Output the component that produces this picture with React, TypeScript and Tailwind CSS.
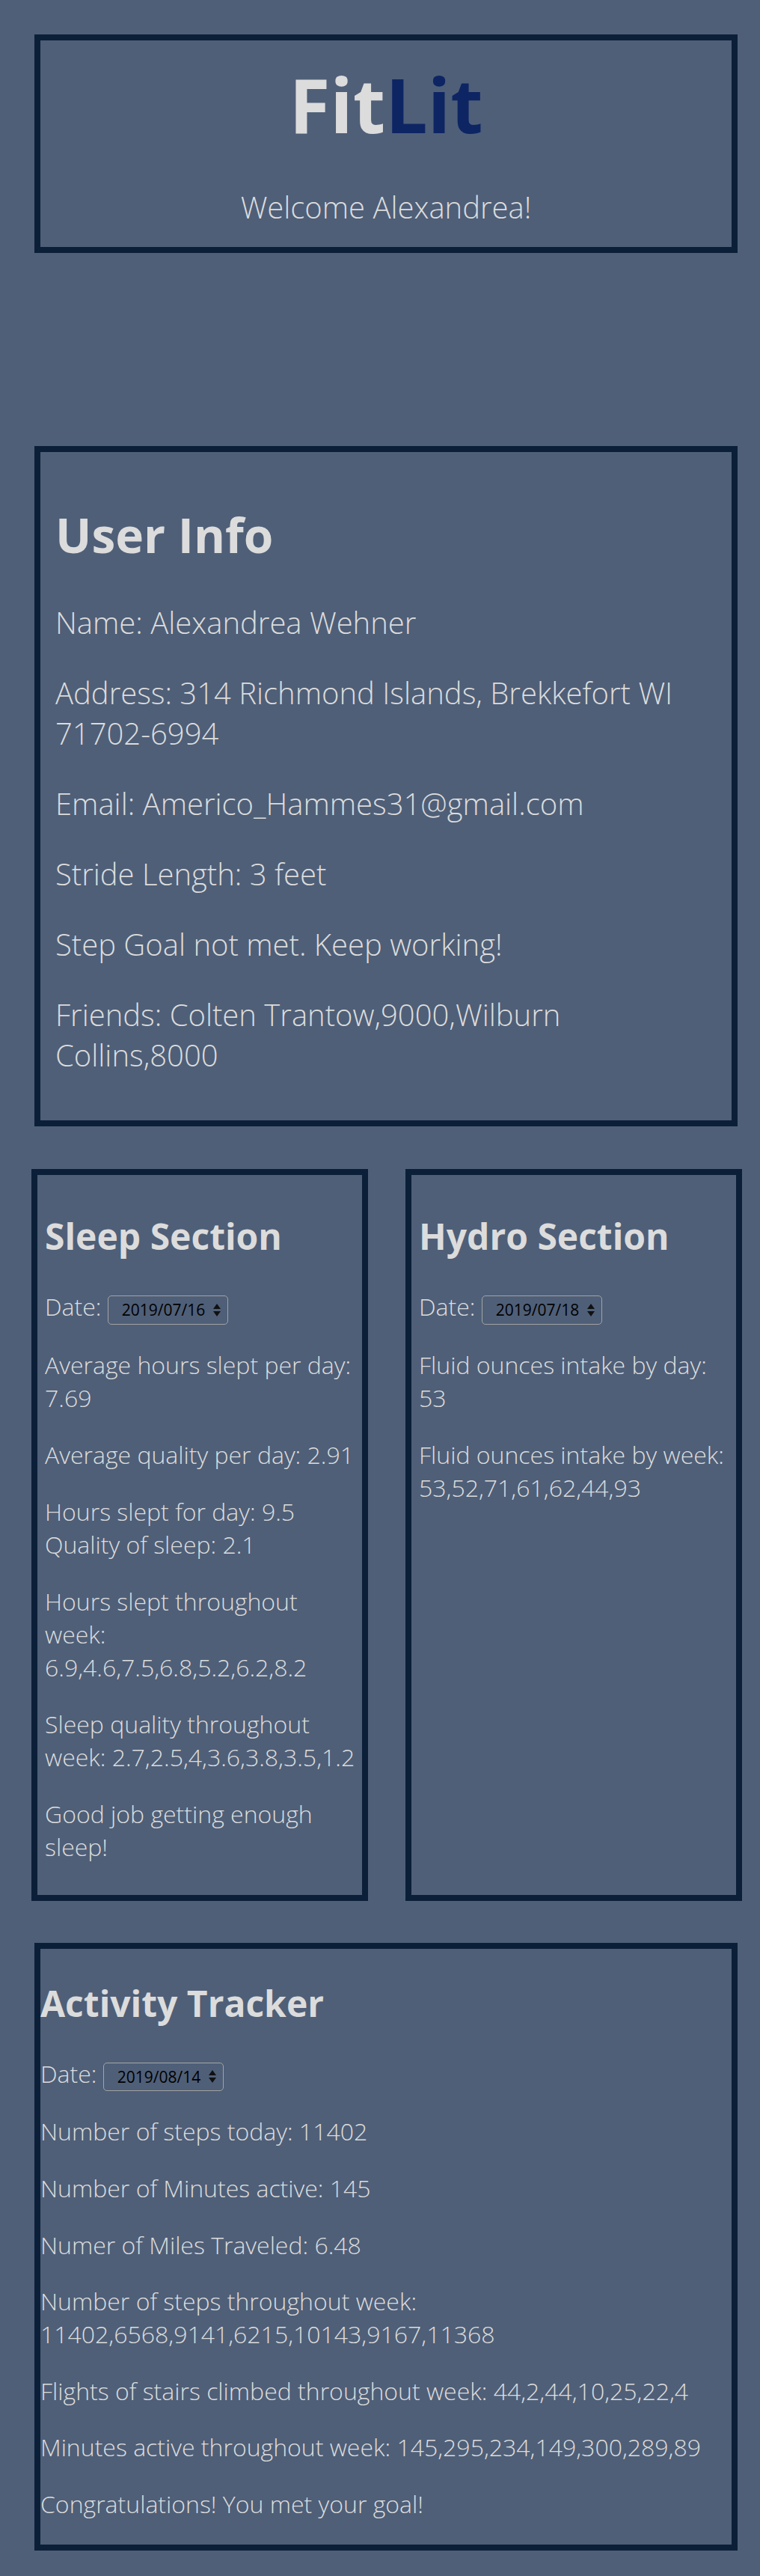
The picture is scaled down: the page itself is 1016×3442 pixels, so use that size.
import React from "react";

function DateSelect({ value }: { value: string }) {
  return (
    <span className="inline-flex h-[38.6px] w-[161px] items-center justify-between rounded-[5px] border border-[#a3a3a3] pl-[18px] pr-[9px] align-baseline text-[21px] font-normal leading-[28.6px] text-black">
      <span>{value}</span>
      <svg width="10" height="17" viewBox="0 0 10 17" aria-hidden="true">
        <path d="M5 0 L10 7 H0 Z M0 10 H10 L5 17 Z" fill="#111" />
      </svg>
    </span>
  );
}

export default function App() {
  return (
    <div className="min-h-screen bg-[#4f5f78] pt-[46px] pb-[30px] font-['Open_Sans',sans-serif] text-[#dcdcdc]">
      <header className="ml-[46px] flex h-[292px] w-[940px] flex-col items-center border-8 border-[#0b1f38]">
        <h1 className="mt-[17px] text-[100px] font-bold leading-[136px]">
          Fit<span className="text-[#0e2564]">Lit</span>
        </h1>
        <p className="mt-[43px] text-[40px] font-light leading-[54px]">Welcome Alexandrea!</p>
      </header>

      <section className="mt-[258px] ml-[46px] w-[940px] border-8 border-[#0b1f38] p-[20px]">
        <h2 className="mt-[47px] mb-[47px] text-[64px] font-bold leading-[87px]">User Info</h2>
        <div className="flex flex-col gap-[40px] pb-[40px] text-[40px] font-light leading-[54px]">
          <p>Name: Alexandrea Wehner</p>
          <p>
            Address: 314 Richmond Islands, Brekkefort WI
            <br />
            71702-6994
          </p>
          <p>Email: Americo_Hammes31@gmail.com</p>
          <p>Stride Length: 3 feet</p>
          <p>Step Goal not met. Keep working!</p>
          <p>
            Friends: Colten Trantow,9000,Wilburn
            <br />
            Collins,8000
          </p>
        </div>
      </section>

      <div className="mt-[57px] flex gap-[50px] pl-[42px]">
        <section className="w-[450px] border-8 border-[#0b1f38] p-[10px]">
          <h2 className="mt-[39px] mb-[40px] text-[48px] font-bold leading-[65px]">Sleep Section</h2>
          <div className="flex flex-col gap-[32px] pb-[32px] text-[32px] font-light leading-[44px] whitespace-nowrap">
            <p>
              Date: <DateSelect value="2019/07/16" />
            </p>
            <p>
              Average hours slept per day:
              <br />
              7.69
            </p>
            <p>Average quality per day: 2.91</p>
            <p>
              Hours slept for day: 9.5
              <br />
              Quality of sleep: 2.1
            </p>
            <p>
              Hours slept throughout
              <br />
              week:
              <br />
              6.9,4.6,7.5,6.8,5.2,6.2,8.2
            </p>
            <p>
              Sleep quality throughout
              <br />
              week: 2.7,2.5,4,3.6,3.8,3.5,1.2
            </p>
            <p>
              Good job getting enough
              <br />
              sleep!
            </p>
          </div>
        </section>

        <section className="w-[450px] border-8 border-[#0b1f38] p-[10px]">
          <h2 className="mt-[39px] mb-[40px] text-[48px] font-bold leading-[65px]">Hydro Section</h2>
          <div className="flex flex-col gap-[32px] text-[32px] font-light leading-[44px] whitespace-nowrap">
            <p>
              Date: <DateSelect value="2019/07/18" />
            </p>
            <p>
              Fluid ounces intake by day:
              <br />
              53
            </p>
            <p>
              Fluid ounces intake by week:
              <br />
              53,52,71,61,62,44,93
            </p>
          </div>
        </section>
      </div>

      <section className="mt-[56px] ml-[46px] w-[940px] border-8 border-[#0b1f38]">
        <h2 className="mt-[40px] mb-[40px] text-[48px] font-bold leading-[65px]">Activity Tracker</h2>
        <div className="flex flex-col gap-[32px] pb-[32px] text-[32px] font-light leading-[43.7px]">
          <p>
            Date: <DateSelect value="2019/08/14" />
          </p>
          <p>Number of steps today: 11402</p>
          <p>Number of Minutes active: 145</p>
          <p>Numer of Miles Traveled: 6.48</p>
          <p>
            Number of steps throughout week:
            <br />
            11402,6568,9141,6215,10143,9167,11368
          </p>
          <p>Flights of stairs climbed throughout week: 44,2,44,10,25,22,4</p>
          <p>Minutes active throughout week: 145,295,234,149,300,289,89</p>
          <p>Congratulations! You met your goal!</p>
        </div>
      </section>
    </div>
  );
}
